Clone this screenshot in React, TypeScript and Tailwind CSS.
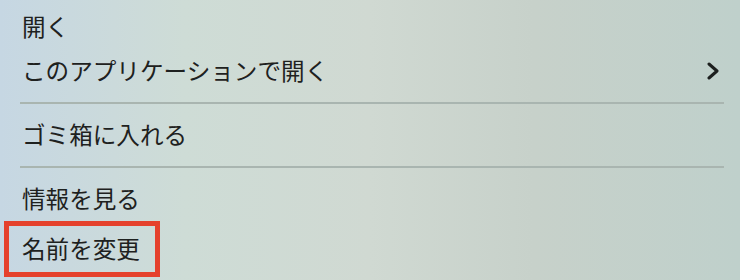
const Row = ({ label, sub }: { label: string; sub?: boolean }) => (
  <div className="flex h-[44px] items-center justify-between pl-[22px] pr-[20px]">
    <span>{label}</span>
    {sub && (
      <svg width="14" height="18" viewBox="0 0 14 18" className="text-[#1c1f1e]">
        <path d="M3 2 L11 9 L3 16" fill="none" stroke="currentColor" strokeWidth="3" strokeLinecap="round" strokeLinejoin="round" />
      </svg>
    )}
  </div>
);

const Separator = () => (
  <div className="flex h-[20px] items-center pl-[20px] pr-[16px]">
    <div className="h-[2px] w-full bg-[#a9b5b0]" />
  </div>
);

export default function App() {
  return (
    <div
      className="h-[280px] w-[740px] overflow-hidden bg-[linear-gradient(90deg,#c6d7e3_0%,#cedcd6_25%,#d0d9d2_50%,#c7d1ca_72%,#bfd0cb_100%)] pt-[5px] text-[23.6px] leading-none text-[#1e2120]"
      style={{ fontFamily: '"Noto Sans CJK JP", "Noto Sans", sans-serif' }}
    >
      <Row label="開く" />
      <Row label="このアプリケーションで開く" sub />
      <Separator />
      <Row label="ゴミ箱に入れる" />
      <Separator />
      <Row label="情報を見る" />
      <div className="pl-[4px]">
        <div className="flex h-[56px] w-[156px] items-center border-[5px] border-[#e5412c] pl-[13px]">
          <span>名前を変更</span>
        </div>
      </div>
    </div>
  );
}
